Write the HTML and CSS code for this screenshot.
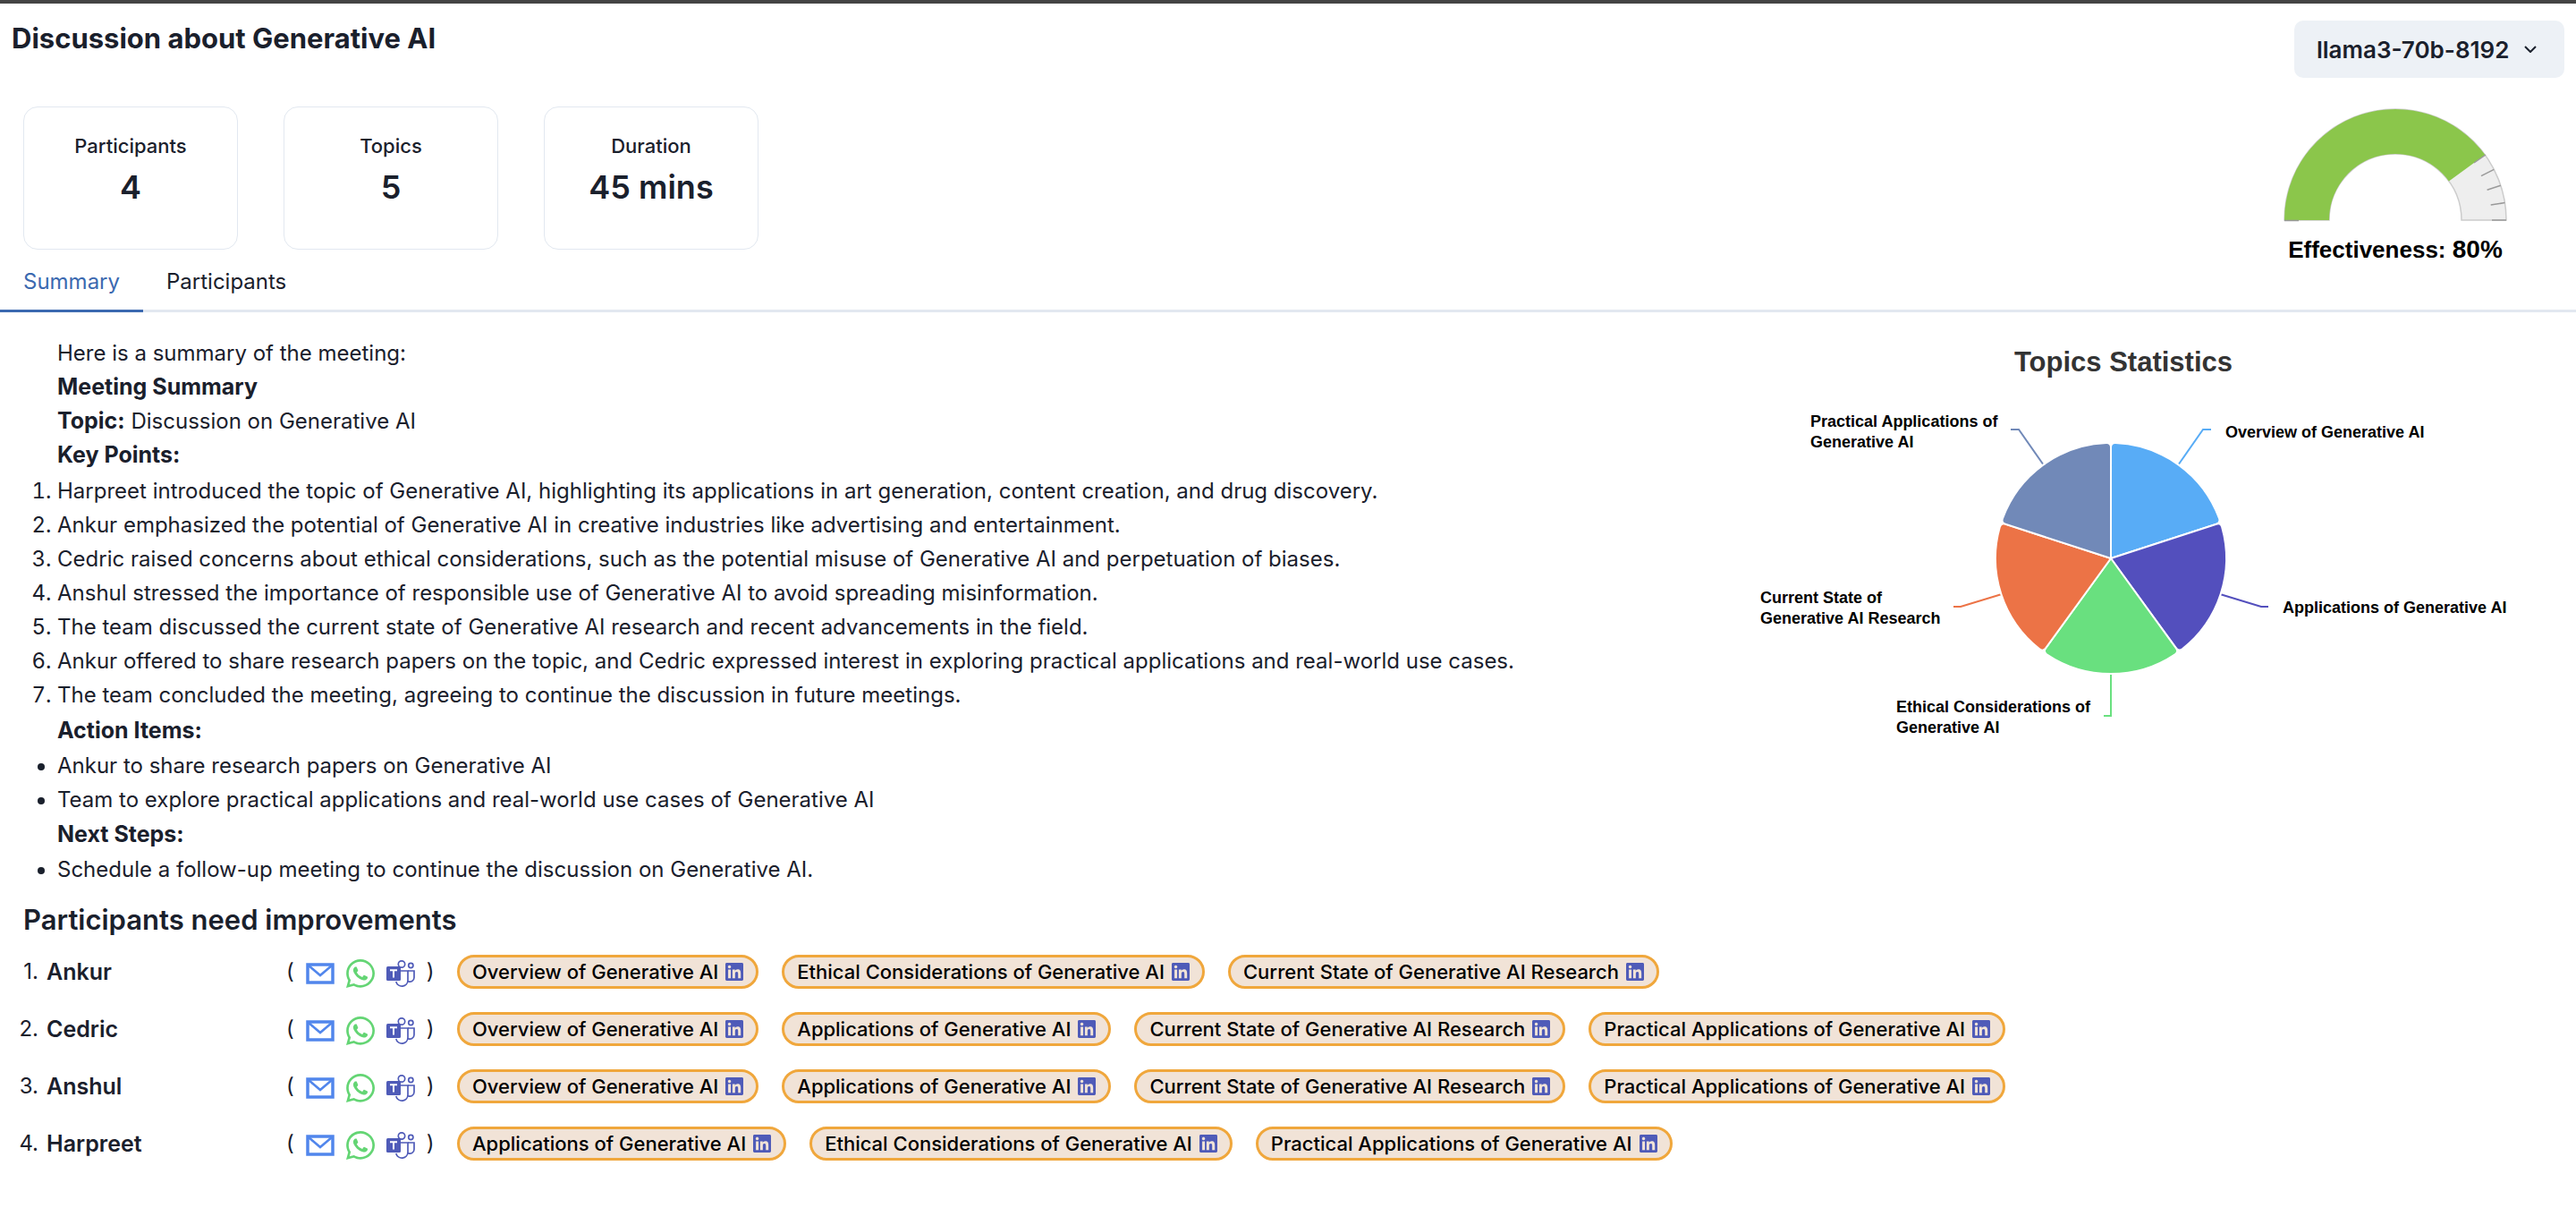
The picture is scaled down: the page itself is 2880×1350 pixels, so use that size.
FILE: index.html
```
<!DOCTYPE html>
<html lang="en">
<head>
<meta charset="utf-8">
<meta name="viewport" content="width=device-width, initial-scale=1">
<title>Discussion about Generative AI</title>
<link rel="stylesheet" href="styles.css">
</head>
<body>
<svg class="sprite" aria-hidden="true">
  <symbol id="mail" viewBox="0 0 32 24">
    <path d="M2 2H30V22H2Z" fill="none" stroke="#5186ec" stroke-width="3.5"/>
    <path d="M3 3L16 14L29 3" fill="none" stroke="#5186ec" stroke-width="2.6"/>
  </symbol>
  <symbol id="whatsapp" viewBox="0 32 448 448">
    <path fill="#64d574" d="M380.9 97.1C339 55.1 283.2 32 223.9 32c-122.4 0-222 99.6-222 222 0 39.1 10.2 77.3 29.6 111L0 480l117.7-30.9c32.4 17.7 68.9 27 106.1 27h.1c122.3 0 224.1-99.6 224.1-222 0-59.3-25.2-115-67.1-157zm-157 341.6c-33.2 0-65.7-8.9-94-25.7l-6.7-4-69.8 18.3L72 359.2l-4.4-7c-18.5-29.4-28.2-63.3-28.2-98.2 0-101.7 82.8-184.5 184.6-184.5 49.3 0 95.6 19.2 130.4 54.1 34.8 34.9 56.2 81.2 56.1 130.5 0 101.8-84.9 184.6-186.6 184.6zm101.2-138.2c-5.5-2.8-32.8-16.2-37.9-18-5.1-1.9-8.8-2.8-12.5 2.8-3.7 5.6-14.3 18-17.6 21.8-3.2 3.7-6.5 4.2-12 1.4-32.6-16.3-54-29.1-75.5-66-5.7-9.8 5.7-9.1 16.3-30.3 1.8-3.7.9-6.9-.5-9.7-1.4-2.8-12.5-30.1-17.1-41.2-4.5-10.8-9.1-9.3-12.5-9.5-3.2-.2-6.9-.2-10.6-.2-3.7 0-9.7 1.4-14.8 6.9-5.1 5.6-19.4 19-19.4 46.3 0 27.3 19.9 53.7 22.6 57.4 2.8 3.7 39.1 59.7 94.8 83.8 35.2 15.2 49 16.5 66.6 13.9 10.7-1.6 32.8-13.4 37.4-26.4 4.6-13 4.6-24.1 3.2-26.4-1.3-2.5-5-3.9-10.5-6.6z"/>
  </symbol>
  <symbol id="teams" viewBox="0 0 32 32">
    <g fill="none" stroke="#4f5bb8" stroke-width="1.7">
      <circle cx="17" cy="5.5" r="3.7"/>
      <circle cx="27.3" cy="7" r="2.6"/>
      <path d="M16 13H24V23.5A6.7 6.7 0 0 1 10.8 25"/>
      <path d="M24 13H31V20.5A4.6 4.6 0 0 1 24 24.4"/>
    </g>
    <rect x="0" y="8" width="16" height="16" rx="1.5" fill="#4f5bb8"/>
    <path d="M4 12.2H12M8 12.2V20.5" stroke="#fff" stroke-width="2"/>
  </symbol>
  <symbol id="linkedin" viewBox="0 32 448 448">
    <path fill="#4f5bb8" d="M416 32H31.9C14.3 32 0 46.5 0 64.3v383.4C0 465.5 14.3 480 31.9 480H416c17.6 0 32-14.5 32-32.3V64.3c0-17.8-14.4-32.3-32-32.3zM135.4 416H69V202.2h66.5V416zm-33.2-243c-21.3 0-38.5-17.3-38.5-38.5S80.9 96 102.2 96c21.2 0 38.5 17.3 38.5 38.5 0 21.3-17.2 38.5-38.5 38.5zm282.1 243h-66.4V312c0-24.8-.5-56.7-34.5-56.7-34.6 0-39.9 27-39.9 54.9V416h-66.4V202.2h63.7v29.2h.9c8.9-16.8 30.6-34.5 62.9-34.5 67.2 0 79.7 44.3 79.7 101.9V416z"/>
  </symbol>
</svg>

<header class="top">
  <div class="overview">
    <h1>Discussion about Generative AI</h1>
    <div class="cards">
      <section class="card"><h2>Participants</h2><p>4</p></section>
      <section class="card"><h2>Topics</h2><p>5</p></section>
      <section class="card"><h2>Duration</h2><p>45 mins</p></section>
    </div>
    <nav class="tabs">
      <button type="button" class="tab active">Summary</button>
      <button type="button" class="tab">Participants</button>
    </nav>
  </div>
  <div class="side">
    <div class="model">
      <select class="model-select" aria-label="Model"><option>llama3-70b-8192</option></select>
      <svg class="chevron" viewBox="0 0 14 8" aria-hidden="true"><path d="M1 1L7 7L13 1" fill="none" stroke="#1a202c" stroke-width="2"/></svg>
    </div>
    <figure class="gauge">
      <svg viewBox="-125 -125 250 127" aria-hidden="true">
        <path d="M-124 0A124 124 0 0 1 124 0H74A74 74 0 0 0 -74 0Z" fill="#eee" stroke="#ccc" stroke-width="1.5"/>
        <path d="M-124 0A124 124 0 0 1 100.3 -72.9L59.9 -43.5A74 74 0 0 0 -74 0Z" fill="#8bc64b"/>
        <path d="M101 -73L88 -64M110.3 -56.7L96 -49.4M117.8 -38.7L102.6 -33.7M122.5 -19.4L106.7 -16.9M124 0H108M-124 .5H-108" stroke="#999" stroke-width="1.5"/>
      </svg>
      <figcaption>Effectiveness: <strong>80%</strong></figcaption>
    </figure>
  </div>
</header>

<main>
  <div class="content">
    <article class="summary">
      <p>Here is a summary of the meeting:</p>
      <p><strong>Meeting Summary</strong></p>
      <p><strong>Topic:</strong> Discussion on Generative AI</p>
      <p><strong>Key Points:</strong></p>
      <ol>
        <li>Harpreet introduced the topic of Generative AI, highlighting its applications in art generation, content creation, and drug discovery.</li>
        <li>Ankur emphasized the potential of Generative AI in creative industries like advertising and entertainment.</li>
        <li>Cedric raised concerns about ethical considerations, such as the potential misuse of Generative AI and perpetuation of biases.</li>
        <li>Anshul stressed the importance of responsible use of Generative AI to avoid spreading misinformation.</li>
        <li>The team discussed the current state of Generative AI research and recent advancements in the field.</li>
        <li>Ankur offered to share research papers on the topic, and Cedric expressed interest in exploring practical applications and real-world use cases.</li>
        <li>The team concluded the meeting, agreeing to continue the discussion in future meetings.</li>
      </ol>
      <p><strong>Action Items:</strong></p>
      <ul>
        <li>Ankur to share research papers on Generative AI</li>
        <li>Team to explore practical applications and real-world use cases of Generative AI</li>
      </ul>
      <p><strong>Next Steps:</strong></p>
      <ul>
        <li>Schedule a follow-up meeting to continue the discussion on Generative AI.</li>
      </ul>
    </article>

    <figure class="chart">
      <figcaption>Topics Statistics</figcaption>
      <svg viewBox="-420 -184 868 400" role="img" aria-label="Topics Statistics">
        <defs><path id="slice" d="M0 0V-124Q0 -129 5 -128.9A129 129 0 0 1 121.1 -44.6Q122.7 -39.9 118 -38.3Z" stroke="#fff" stroke-width="2"/></defs>
        <g fill="none" stroke-width="2">
          <path d="M75 -104L103 -144H112" stroke="#58acf6"/>
          <path d="M122 40L168 54H176" stroke="#534fbd"/>
          <path d="M0 128V176H-8" stroke="#69e07f"/>
          <path d="M-122 40L-168 54H-176" stroke="#ec7346"/>
          <path d="M-75 -104L-103 -144H-112" stroke="#7189b8"/>
        </g>
        <use href="#slice" fill="#58acf6"/>
        <use href="#slice" fill="#534fbd" transform="rotate(72)"/>
        <use href="#slice" fill="#69e07f" transform="rotate(144)"/>
        <use href="#slice" fill="#ec7346" transform="rotate(216)"/>
        <use href="#slice" fill="#7189b8" transform="rotate(288)"/>
        <g class="labels">
          <text x="128" y="-135">Overview of Generative AI</text>
          <text x="192" y="61">Applications of Generative AI</text>
          <text x="-240" y="172">Ethical Considerations of<tspan x="-240" dy="23">Generative AI</tspan></text>
          <text x="-392" y="50">Current State of<tspan x="-392" dy="23">Generative AI Research</tspan></text>
          <text x="-336" y="-147">Practical Applications of<tspan x="-336" dy="23">Generative AI</tspan></text>
        </g>
      </svg>
    </figure>
  </div>

  <section class="improve">
    <h2>Participants need improvements</h2>
    <ol class="people">
      <li>
        <strong class="name">Ankur</strong>
        <span class="contact">( <a href="#mail-ankur" aria-label="Email"><svg class="mail"><use href="#mail"/></svg></a><a href="#chat-ankur" aria-label="WhatsApp"><svg class="icon"><use href="#whatsapp"/></svg></a><a href="#teams-ankur" aria-label="Teams"><svg class="icon"><use href="#teams"/></svg></a> )</span>
        <span class="chips">
          <a class="chip" href="#overview">Overview of Generative AI<svg><use href="#linkedin"/></svg></a>
          <a class="chip" href="#ethics">Ethical Considerations of Generative AI<svg><use href="#linkedin"/></svg></a>
          <a class="chip" href="#research">Current State of Generative AI Research<svg><use href="#linkedin"/></svg></a>
        </span>
      </li>
      <li>
        <strong class="name">Cedric</strong>
        <span class="contact">( <a href="#mail-cedric" aria-label="Email"><svg class="mail"><use href="#mail"/></svg></a><a href="#chat-cedric" aria-label="WhatsApp"><svg class="icon"><use href="#whatsapp"/></svg></a><a href="#teams-cedric" aria-label="Teams"><svg class="icon"><use href="#teams"/></svg></a> )</span>
        <span class="chips">
          <a class="chip" href="#overview">Overview of Generative AI<svg><use href="#linkedin"/></svg></a>
          <a class="chip" href="#applications">Applications of Generative AI<svg><use href="#linkedin"/></svg></a>
          <a class="chip" href="#research">Current State of Generative AI Research<svg><use href="#linkedin"/></svg></a>
          <a class="chip" href="#practical">Practical Applications of Generative AI<svg><use href="#linkedin"/></svg></a>
        </span>
      </li>
      <li>
        <strong class="name">Anshul</strong>
        <span class="contact">( <a href="#mail-anshul" aria-label="Email"><svg class="mail"><use href="#mail"/></svg></a><a href="#chat-anshul" aria-label="WhatsApp"><svg class="icon"><use href="#whatsapp"/></svg></a><a href="#teams-anshul" aria-label="Teams"><svg class="icon"><use href="#teams"/></svg></a> )</span>
        <span class="chips">
          <a class="chip" href="#overview">Overview of Generative AI<svg><use href="#linkedin"/></svg></a>
          <a class="chip" href="#applications">Applications of Generative AI<svg><use href="#linkedin"/></svg></a>
          <a class="chip" href="#research">Current State of Generative AI Research<svg><use href="#linkedin"/></svg></a>
          <a class="chip" href="#practical">Practical Applications of Generative AI<svg><use href="#linkedin"/></svg></a>
        </span>
      </li>
      <li>
        <strong class="name">Harpreet</strong>
        <span class="contact">( <a href="#mail-harpreet" aria-label="Email"><svg class="mail"><use href="#mail"/></svg></a><a href="#chat-harpreet" aria-label="WhatsApp"><svg class="icon"><use href="#whatsapp"/></svg></a><a href="#teams-harpreet" aria-label="Teams"><svg class="icon"><use href="#teams"/></svg></a> )</span>
        <span class="chips">
          <a class="chip" href="#applications">Applications of Generative AI<svg><use href="#linkedin"/></svg></a>
          <a class="chip" href="#ethics">Ethical Considerations of Generative AI<svg><use href="#linkedin"/></svg></a>
          <a class="chip" href="#practical">Practical Applications of Generative AI<svg><use href="#linkedin"/></svg></a>
        </span>
      </li>
    </ol>
  </section>
</main>
</body>
</html>
```
FILE: styles.css
```
* { box-sizing: border-box; }

body, h1, h2, p, ol, ul, figure { margin: 0; padding: 0; }

body {
  border-top: 4px solid #444;
  background: #fff;
  color: #1a202c;
  font: 24px/38px Inter, "Liberation Sans", sans-serif;
}

button, select { font: inherit; color: inherit; }

.sprite { position: absolute; width: 0; height: 0; }

/* Header: title, figures and tabs on the left, model and gauge on the right */
.top {
  display: flex;
  justify-content: space-between;
  border-bottom: 3px solid #e2e8f0;
}

.overview { padding-top: 19px; }

h1 {
  padding-left: 13px;
  font-size: 31px;
  line-height: 40px;
  font-weight: 700;
}

.cards {
  display: flex;
  gap: 51px;
  margin-top: 56px;
  padding-left: 26px;
}

.card {
  width: 240px;
  min-height: 160px;
  padding-top: 25px;
  border: 1px solid #e2e8f0;
  border-radius: 16px;
  text-align: center;
}

.card h2 {
  font-size: 22px;
  line-height: 36px;
  font-weight: 500;
}

.card p {
  font-size: 36px;
  line-height: 56px;
  font-weight: 600;
}

.tabs { display: flex; }

.tab {
  margin-bottom: -3px;
  padding: 17px 26px 12px;
  border: 0;
  border-bottom: 3px solid transparent;
  background: none;
}

.tab.active {
  border-color: #3b69b0;
  color: #3b69b0;
}

.side {
  display: flex;
  flex-direction: column;
  align-items: flex-end;
  padding: 19px 13px 0 0;
}

.model {
  display: grid;
  align-items: center;
}

.model-select {
  grid-area: 1 / 1;
  width: 302px;
  height: 64px;
  padding: 2px 25px 0;
  border: 0;
  border-radius: 10px;
  background: #edf1f6;
  font-size: 26px;
  font-weight: 600;
  appearance: none;
}

.chevron {
  grid-area: 1 / 1;
  justify-self: end;
  width: 14px;
  height: 8px;
  margin-right: 31px;
  pointer-events: none;
}

.gauge {
  width: 250px;
  margin: 34px 64px 0 0;
  color: #000;
  font: 700 26px/42px "Liberation Sans", Arial, sans-serif;
  text-align: center;
  white-space: nowrap;
}

.gauge svg { display: block; width: 100%; height: 127px; }

.gauge figcaption { padding-top: 10px; }

.gauge strong { font-size: 28px; font-weight: 700; }

/* Summary and chart */
.content {
  display: flex;
  justify-content: space-between;
}

.summary {
  display: flex;
  flex-direction: column;
  padding: 27px 0 0 64px;
}

.summary ol { margin: 2px 0; }

.summary ul { margin: 1px 0; }

strong { font-weight: 600; }

.summary strong { font-size: 25px; line-height: 1; font-weight: 700; }

.chart {
  flex: 0 0 868px;
  margin-right: 72px;
  padding-top: 36px;
  font-family: "Liberation Sans", Arial, sans-serif;
  font-weight: 700;
}

.chart figcaption {
  color: #333;
  font-size: 31px;
  line-height: 40px;
  text-align: center;
}

.chart svg { display: block; width: 100%; height: 400px; margin-top: 15px; }

.labels { font-size: 18px; fill: #000; }

/* Participants who need improvements */
.improve h2 {
  margin: 16px 0 19px 26px;
  font-size: 31px;
  line-height: 40px;
  font-weight: 600;
}

.people {
  display: grid;
  gap: 26px;
  list-style: none;
  counter-reset: person;
}

.people li {
  display: grid;
  grid-template-columns: 52px 268px 191px 1fr;
  align-items: center;
  height: 38px;
  counter-increment: person;
}

.people li::before {
  content: counter(person) ".";
  padding-right: 9px;
  text-align: right;
}

.name { font-size: 25px; }

.contact {
  display: flex;
  align-items: center;
  gap: 13px;
}

.contact a { display: block; height: 32px; margin-top: 4px; }

.contact svg { display: block; width: 32px; }

.icon { height: 32px; }

.mail { height: 24px; margin-top: 4px; }

.chips { display: flex; gap: 26px; }

.chip {
  display: flex;
  align-items: center;
  gap: 8px;
  height: 38px;
  padding: 0 14px;
  border: 3px solid #f0a73c;
  border-radius: 19px;
  background: #f1e3d7;
  color: #000;
  font-size: 22px;
  font-weight: 500;
  text-decoration: none;
  white-space: nowrap;
}

.chip svg { width: 20px; height: 20px; }
```
